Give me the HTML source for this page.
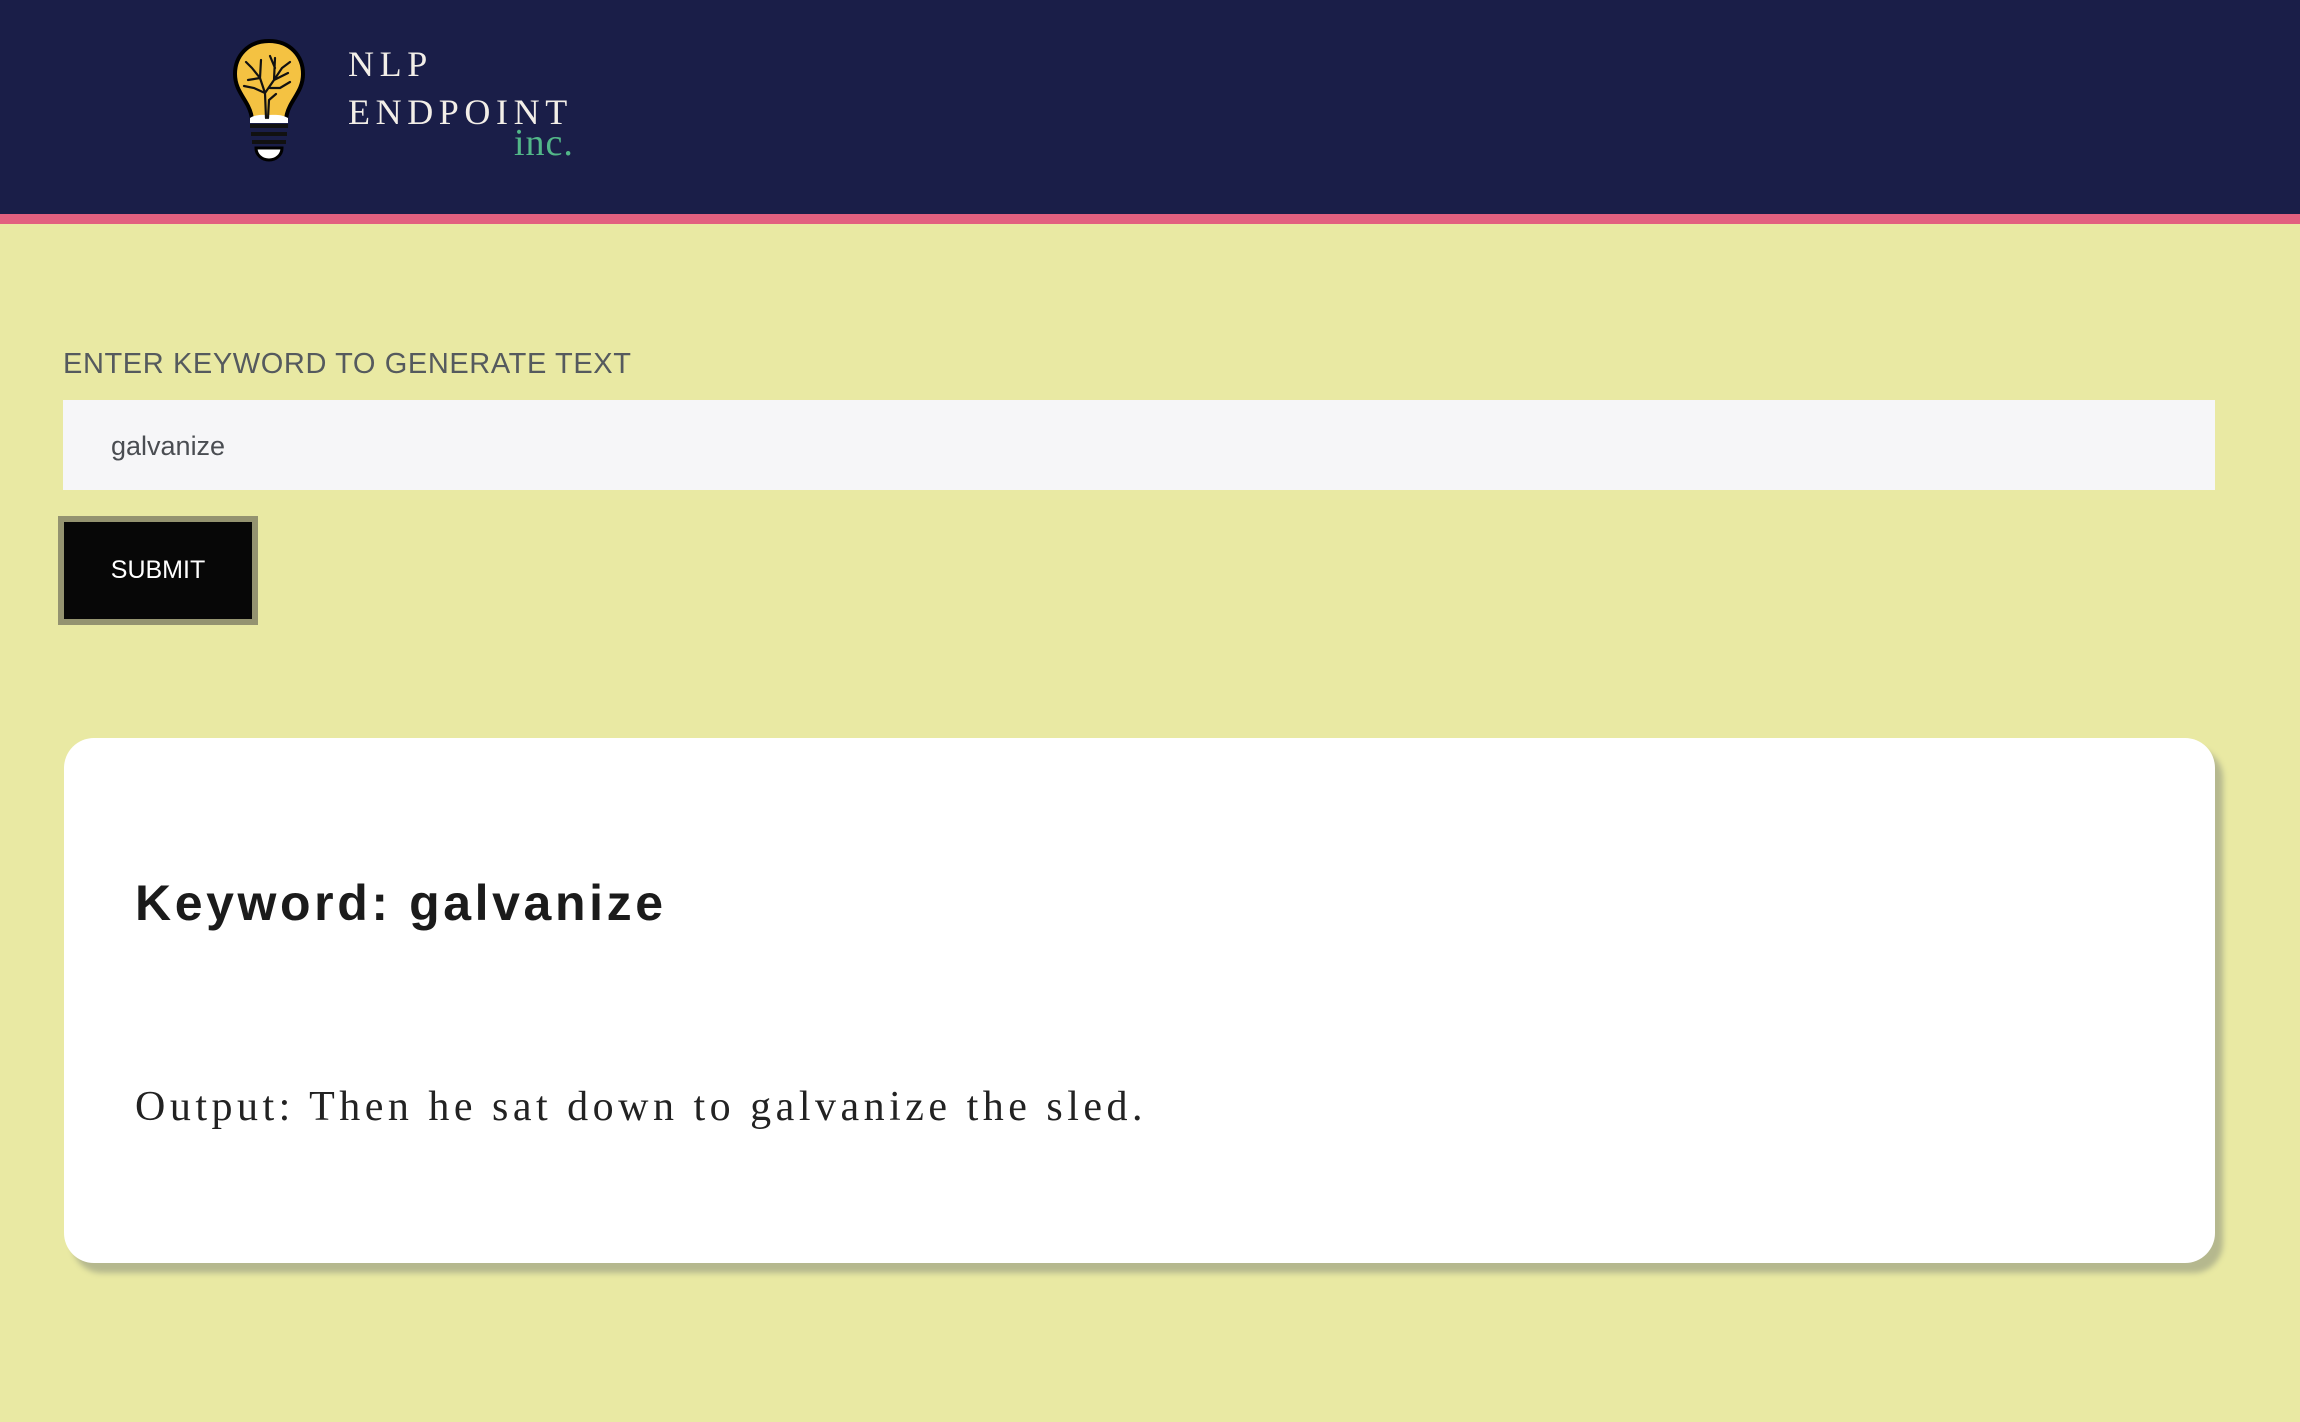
<!DOCTYPE html>
<html><head><meta charset="utf-8"><style>
*{margin:0;padding:0;box-sizing:border-box}
body{width:2300px;height:1422px;background:#e9e9a3;font-family:"Liberation Sans",sans-serif;overflow:hidden;position:relative}
.hdr{position:absolute;left:0;top:0;width:2300px;height:214px;background:#1a1e48}
.stripe{position:absolute;left:0;top:214px;width:2300px;height:10px;background:#e2607f}
.t{position:absolute;font-family:"Liberation Serif",serif;color:#f3efe8;font-size:36px;letter-spacing:5.6px;line-height:1}
.inc{position:absolute;left:514px;top:124px;font-family:"Liberation Serif",serif;color:#52b788;font-size:38px;line-height:1;letter-spacing:1px}
.lbl{position:absolute;left:63px;top:348px;font-size:29px;color:#555a5e;white-space:nowrap;letter-spacing:0.6px}
.inp{position:absolute;left:63px;top:400px;width:2152px;height:90px;background:#f6f6f8}
.inp span{position:absolute;left:48px;top:31px;font-size:27px;color:#4a4d52}
.btn{position:absolute;left:58px;top:516px;width:200px;height:109px;background:#070707;border:6px solid #949370;color:#fff;font-size:25px;display:flex;align-items:center;justify-content:center}
.card{position:absolute;left:64px;top:738px;width:2151px;height:525px;background:#fff;border-radius:30px;box-shadow:8px 10px 6px #b5b88e}
.kw{position:absolute;left:71px;top:136px;font-size:50px;font-weight:bold;letter-spacing:3.6px;color:#1b1b1b}
.out{position:absolute;left:71px;top:345px;font-family:"Liberation Serif",serif;font-size:42px;letter-spacing:4.5px;color:#222;white-space:nowrap}
</style></head><body>
<div class="hdr">
<svg style="position:absolute;left:230px;top:38px" width="78" height="124" viewBox="0 0 78 124">
<path d="M39 3C18 3 5 18 5 36c0 14 8 22 13 32 3 6 4 11 4 15h34c0-4 1-9 4-15 5-10 13-18 13-32C73 18 60 3 39 3z" fill="#f4c242" stroke="#000" stroke-width="4"/>
<path d="M20 80c6-4 14-3 19-3s12-1 19 3v5H20z" fill="#fff"/>
<g stroke="#111" stroke-width="2.2" fill="none" stroke-linecap="round">
<path d="M36 80L35 55 30 40 22 30M35 55L44 42 52 30M44 42L58 35M30 40L18 42M35 55L24 50 14 48M40 50L50 50 60 44M30 40L31 22M44 42L45 20M52 30L60 24M22 30L16 24M45 30L40 18M38 80L39 62 46 56"/>
</g>
<g stroke="#111" stroke-width="4" fill="none">
<path d="M20 88h38M21 96h36M22 104h34"/>
</g>
<path d="M26 110h26c0 7-6 12-13 12s-13-5-13-12z" fill="#fff" stroke="#000" stroke-width="3"/>
</svg>
<div class="t" style="left:348px;top:46px">NLP</div>
<div class="t" style="left:348px;top:94px">ENDPOINT</div>
<div class="inc">inc.</div>
</div>
<div class="stripe"></div>
<div class="lbl">ENTER KEYWORD TO GENERATE TEXT</div>
<div class="inp"><span>galvanize</span></div>
<div class="btn">SUBMIT</div>
<div class="card">
<div class="kw">Keyword: galvanize</div>
<div class="out">Output: Then he sat down to galvanize the sled.</div>
</div>
</body></html>
